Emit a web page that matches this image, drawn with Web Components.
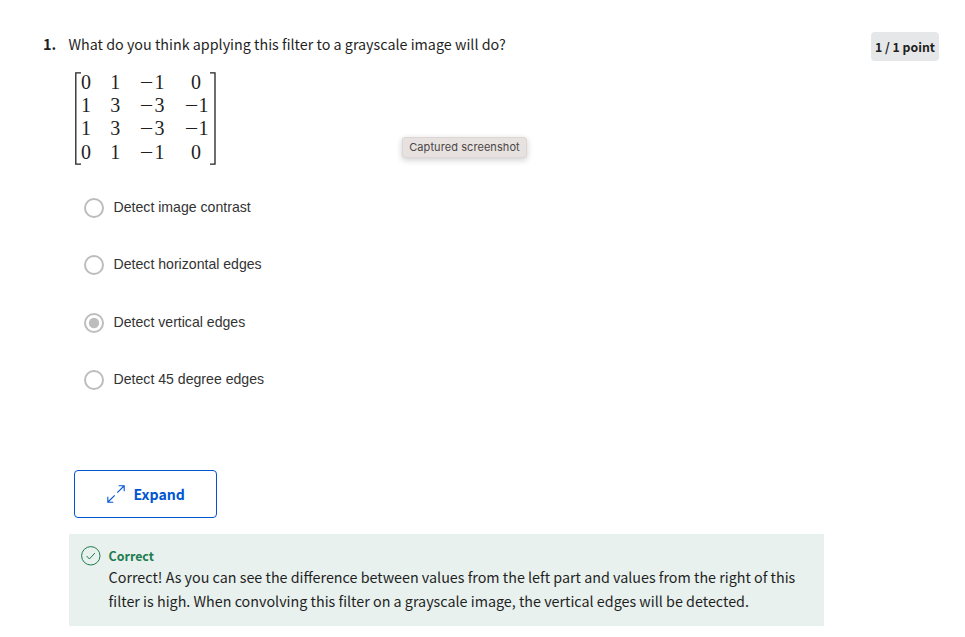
<!DOCTYPE html>
<html lang="en">
<head>
<meta charset="utf-8">
<title>Quiz question</title>
<style>
body { margin: 0; background: #fff; color: #1f1f1f; font-family: "Noto Sans CJK SC", "Noto Sans", sans-serif; }
</style>
</head>
<body>
<quiz-question number="1.">
  <span slot="prompt">What do you think applying this filter to a grayscale image will do?</span>
  <score-badge slot="score">1 / 1 point</score-badge>
  <math-matrix rows="0,1,−1,0;1,3,−3,−1;1,3,−3,−1;0,1,−1,0"></math-matrix>
  <div class="options">
    <quiz-option>Detect image contrast</quiz-option>
    <quiz-option>Detect horizontal edges</quiz-option>
    <quiz-option checked>Detect vertical edges</quiz-option>
    <quiz-option>Detect 45 degree edges</quiz-option>
  </div>
  <expand-button slot="footer">Expand</expand-button>
  <feedback-panel slot="footer">
    <span slot="title">Correct</span>
    <span>Correct! As you can see the difference between values from the left part and values from the right of this<br>filter is high. When convolving this filter on a grayscale image, the vertical edges will be detected.</span>
  </feedback-panel>
</quiz-question>
<capture-tip>Captured screenshot</capture-tip>

<script>
function define(name, html, setup) {
  customElements.define(name, class extends HTMLElement {
    connectedCallback() {
      if (this.shadowRoot) return;
      const root = this.attachShadow({ mode: 'open' });
      root.innerHTML = html;
      if (setup) setup(this, root);
    }
  });
}

define('quiz-question', `
<style>
:host { display: block; height: 637px; overflow: hidden; box-sizing: border-box; padding: 32px 26px 0 43px; }
header { display: flex; height: 40px; }
.num { width: 25.5px; font-weight: 700; font-size: 14.5px; line-height: 24px; flex: none; }
.prompt { flex: 1; font-size: 14.32px; line-height: 24px; white-space: nowrap; }
.content { padding-left: 32px; height: 398px; }
.footer { padding-left: 26px; display: flex; flex-direction: column; gap: 16px; align-items: flex-start; }
</style>
<header><div class="num"></div><div class="prompt"><slot name="prompt"></slot></div><slot name="score"></slot></header>
<div class="content"><slot></slot></div>
<div class="footer"><slot name="footer"></slot></div>`,
(el, root) => { root.querySelector('.num').textContent = el.getAttribute('number'); });

define('score-badge', `
<style>
:host { display: flex; align-items: center; justify-content: center; width: 68px; height: 29px; border-radius: 4px; background: #e5e7e8; font-weight: 700; font-size: 12.3px; white-space: nowrap; }
</style><slot></slot>`);

define('math-matrix', `
<style>
:host { display: flex; width: 141px; height: 93px; font-family: "Liberation Serif", serif; font-size: 20px; color: #1f1f1f; }
svg { display: block; flex: none; }
.grid { display: grid; grid-template-columns: 10px 10px 25px 25px; column-gap: 19.2px; grid-auto-rows: 23.2px; line-height: 21px; width: 129px; text-align: center; white-space: nowrap; }
.minus { display: inline-block; width: 15px; text-align: center; transform: scaleX(1.2); }
</style>
<svg width="6" height="93" viewBox="0 0 6 93" fill="none" stroke="#222" stroke-width="1.3"><path d="M6 .9H.8V92.2H6"/></svg>
<div class="grid"></div>
<svg width="6" height="93" viewBox="0 0 6 93" fill="none" stroke="#222" stroke-width="1.3"><path d="M-.2 .9H5V92.2H-.2"/></svg>`,
(el, root) => {
  const grid = root.querySelector('.grid');
  for (const cell of el.getAttribute('rows').split(/[;,]/)) {
    const d = document.createElement('div');
    d.innerHTML = cell.replace('−', '<span class="minus">−</span>');
    grid.append(d);
  }
});

define('quiz-option', `
<style>
:host { display: flex; align-items: center; gap: 10px; height: 20px; margin: 0 0 37.5px 8.6px; font: 14.1px/20px "Liberation Sans", Arial, sans-serif; color: #333; }
:host(:first-child) { margin-top: 32.9px; }
svg { display: block; flex: none; }
.dot { display: none; }
:host([checked]) .dot { display: block; }
span { padding-bottom: 2.6px; }
</style>
<svg width="20" height="20" viewBox="0 0 20 20"><circle cx="10" cy="10" r="9" fill="none" stroke="#bdbdbd" stroke-width="2"/><circle class="dot" cx="10" cy="10" r="5.2" fill="#bdbdbd"/></svg>
<span><slot></slot></span>`);

define('expand-button', `
<style>
:host { display: flex; align-items: center; gap: 9px; box-sizing: border-box; width: 143px; height: 48px; margin-left: 4.6px; padding: 0 0 1px 32px; border: 1px solid #0056d2; border-radius: 4px; color: #0056d2; font-weight: 700; font-size: 14.1px; }
svg { display: block; }
</style>
<svg width="18" height="18" viewBox="0 0 18 18" fill="none" stroke="#0056d2" stroke-width="1.1"><path d="M10.3 7.7 17 1M11.7.8H17.2V6.3M7.7 10.3 1 17M.8 11.7V17.2H6.3"/></svg>
<slot></slot>`);

define('feedback-panel', `
<style>
:host { display: flex; gap: 7.6px; box-sizing: border-box; width: 755px; height: 92px; padding: 12px 12px 0; background: #e8f1ee; }
svg { display: block; flex: none; }
.title { font-weight: 700; font-size: 12.4px; line-height: 20px; color: #1d7c50; }
.body { margin-top: -.6px; font-size: 14.32px; line-height: 24px; white-space: nowrap; }
</style>
<svg width="20" height="20" viewBox="0 0 20 20" fill="none" stroke="#1d7c50" stroke-width="1"><circle cx="9.8" cy="9.8" r="9.2"/><path d="M5.6 10 8.4 13 13.9 7"/></svg>
<div><div class="title"><slot name="title"></slot></div><div class="body"><slot></slot></div></div>`);

define('capture-tip', `
<style>
:host { position: absolute; left: 402px; top: 137px; width: 125px; height: 21px; box-sizing: border-box; display: flex; align-items: center; justify-content: center; padding-bottom: 1px; background: #e7e1df; border: 1px solid #dcd6d4; border-radius: 3px; box-shadow: 0 2px 6px rgba(0,0,0,.2); color: #4a4747; font: 11px Inter, sans-serif; letter-spacing: .07px; white-space: nowrap; }
</style><slot></slot>`);
</script>
</body>
</html>
